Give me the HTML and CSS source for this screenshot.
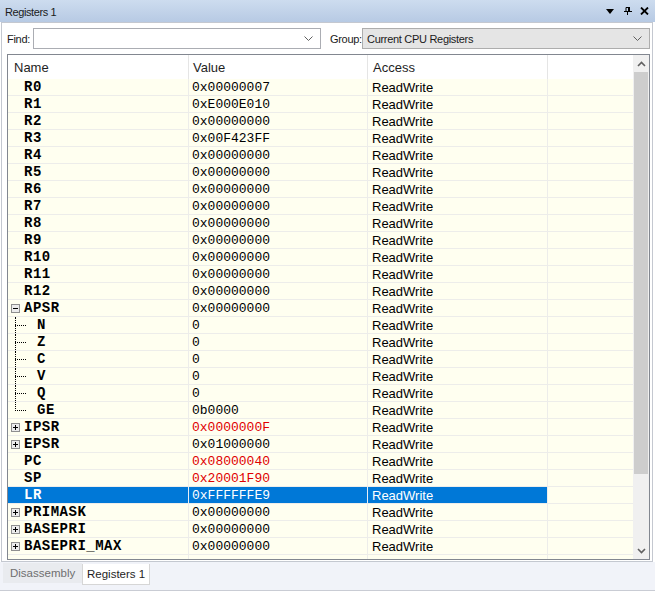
FILE: index.html
```html
<!DOCTYPE html>
<html>
<head>
<meta charset="utf-8">
<title>Registers 1</title>
<link rel="stylesheet" href="styles.css">
</head>
<body>
<div class="titlebar">
  <span class="title">Registers 1</span>
  <svg class="ic ic-menu" width="8" height="5" viewBox="0 0 8 5"><path d="M0 0H8L4 5Z" fill="#000"/></svg>
  <svg class="ic ic-pin" width="8" height="8" viewBox="0 0 8 8"><path d="M2 0.5H5.5V4.5M2 0.5V4.5" fill="none" stroke="#000"/><path d="M5 0V5" stroke="#000" stroke-width="2"/><path d="M0 4.5H8" stroke="#000"/><path d="M3.5 5V8" stroke="#000"/></svg>
  <svg class="ic ic-close" width="9" height="8" viewBox="0 0 9 8"><path d="M1 0.5L8 7.5M8 0.5L1 7.5" stroke="#000" stroke-width="1.8"/></svg>
</div>

<div class="panel">
  <div class="toolbar">
    <span class="lbl lbl-find">Find:</span>
    <div class="combo combo-find">
      <span class="combo-text"></span>
      <svg class="chev" width="9" height="5" viewBox="0 0 9 5"><path d="M0.5 0.5L4.5 4.5L8.5 0.5" fill="none" stroke="#606060"/></svg>
    </div>
    <span class="lbl lbl-group">Group:</span>
    <div class="combo combo-group">
      <span class="combo-text">Current CPU Registers</span>
      <svg class="chev" width="9" height="5" viewBox="0 0 9 5"><path d="M0.5 0.5L4.5 4.5L8.5 0.5" fill="none" stroke="#606060"/></svg>
    </div>
  </div>

  <div class="list">
    <div class="grid">
      <div class="hdr">
        <div class="hc hc-name">Name</div>
        <div class="hc hc-val">Value</div>
        <div class="hc hc-acc">Access</div>
        <div class="hc hc-end"></div>
      </div>
      <div class="rows">
        <div class="row"><div class="c1">R0</div><div class="c2">0x00000007</div><div class="c3">ReadWrite</div><div class="c4"></div></div>
        <div class="row"><div class="c1">R1</div><div class="c2">0xE000E010</div><div class="c3">ReadWrite</div><div class="c4"></div></div>
        <div class="row"><div class="c1">R2</div><div class="c2">0x00000000</div><div class="c3">ReadWrite</div><div class="c4"></div></div>
        <div class="row"><div class="c1">R3</div><div class="c2">0x00F423FF</div><div class="c3">ReadWrite</div><div class="c4"></div></div>
        <div class="row"><div class="c1">R4</div><div class="c2">0x00000000</div><div class="c3">ReadWrite</div><div class="c4"></div></div>
        <div class="row"><div class="c1">R5</div><div class="c2">0x00000000</div><div class="c3">ReadWrite</div><div class="c4"></div></div>
        <div class="row"><div class="c1">R6</div><div class="c2">0x00000000</div><div class="c3">ReadWrite</div><div class="c4"></div></div>
        <div class="row"><div class="c1">R7</div><div class="c2">0x00000000</div><div class="c3">ReadWrite</div><div class="c4"></div></div>
        <div class="row"><div class="c1">R8</div><div class="c2">0x00000000</div><div class="c3">ReadWrite</div><div class="c4"></div></div>
        <div class="row"><div class="c1">R9</div><div class="c2">0x00000000</div><div class="c3">ReadWrite</div><div class="c4"></div></div>
        <div class="row"><div class="c1">R10</div><div class="c2">0x00000000</div><div class="c3">ReadWrite</div><div class="c4"></div></div>
        <div class="row"><div class="c1">R11</div><div class="c2">0x00000000</div><div class="c3">ReadWrite</div><div class="c4"></div></div>
        <div class="row"><div class="c1">R12</div><div class="c2">0x00000000</div><div class="c3">ReadWrite</div><div class="c4"></div></div>
        <div class="row"><div class="c1 has-exp"><svg class="exp" width="9" height="9" viewBox="0 0 9 9"><rect x="0.5" y="0.5" width="8" height="8" fill="#ececec" stroke="#8f8f8f"/><path d="M2 4.5H7" stroke="#000"/></svg>APSR</div><div class="c2">0x00000000</div><div class="c3">ReadWrite</div><div class="c4"></div></div>
        <div class="row"><div class="c1 child"><span class="twig"></span>N</div><div class="c2">0</div><div class="c3">ReadWrite</div><div class="c4"></div></div>
        <div class="row"><div class="c1 child"><span class="twig"></span>Z</div><div class="c2">0</div><div class="c3">ReadWrite</div><div class="c4"></div></div>
        <div class="row"><div class="c1 child"><span class="twig"></span>C</div><div class="c2">0</div><div class="c3">ReadWrite</div><div class="c4"></div></div>
        <div class="row"><div class="c1 child"><span class="twig"></span>V</div><div class="c2">0</div><div class="c3">ReadWrite</div><div class="c4"></div></div>
        <div class="row"><div class="c1 child"><span class="twig"></span>Q</div><div class="c2">0</div><div class="c3">ReadWrite</div><div class="c4"></div></div>
        <div class="row"><div class="c1 child"><span class="twig last"></span>GE</div><div class="c2">0b0000</div><div class="c3">ReadWrite</div><div class="c4"></div></div>
        <div class="row"><div class="c1 has-exp"><svg class="exp" width="9" height="9" viewBox="0 0 9 9"><rect x="0.5" y="0.5" width="8" height="8" fill="#ececec" stroke="#8f8f8f"/><path d="M2 4.5H7M4.5 2V7" stroke="#000"/></svg>IPSR</div><div class="c2 chg">0x0000000F</div><div class="c3">ReadWrite</div><div class="c4"></div></div>
        <div class="row"><div class="c1 has-exp"><svg class="exp" width="9" height="9" viewBox="0 0 9 9"><rect x="0.5" y="0.5" width="8" height="8" fill="#ececec" stroke="#8f8f8f"/><path d="M2 4.5H7M4.5 2V7" stroke="#000"/></svg>EPSR</div><div class="c2">0x01000000</div><div class="c3">ReadWrite</div><div class="c4"></div></div>
        <div class="row"><div class="c1">PC</div><div class="c2 chg">0x08000040</div><div class="c3">ReadWrite</div><div class="c4"></div></div>
        <div class="row"><div class="c1">SP</div><div class="c2 chg">0x20001F90</div><div class="c3">ReadWrite</div><div class="c4"></div></div>
        <div class="row sel"><div class="c1">LR</div><div class="c2">0xFFFFFFE9</div><div class="c3">ReadWrite</div><div class="c4"></div></div>
        <div class="row"><div class="c1 has-exp"><svg class="exp" width="9" height="9" viewBox="0 0 9 9"><rect x="0.5" y="0.5" width="8" height="8" fill="#ececec" stroke="#8f8f8f"/><path d="M2 4.5H7M4.5 2V7" stroke="#000"/></svg>PRIMASK</div><div class="c2">0x00000000</div><div class="c3">ReadWrite</div><div class="c4"></div></div>
        <div class="row"><div class="c1 has-exp"><svg class="exp" width="9" height="9" viewBox="0 0 9 9"><rect x="0.5" y="0.5" width="8" height="8" fill="#ececec" stroke="#8f8f8f"/><path d="M2 4.5H7M4.5 2V7" stroke="#000"/></svg>BASEPRI</div><div class="c2">0x00000000</div><div class="c3">ReadWrite</div><div class="c4"></div></div>
        <div class="row"><div class="c1 has-exp"><svg class="exp" width="9" height="9" viewBox="0 0 9 9"><rect x="0.5" y="0.5" width="8" height="8" fill="#ececec" stroke="#8f8f8f"/><path d="M2 4.5H7M4.5 2V7" stroke="#000"/></svg>BASEPRI_MAX</div><div class="c2">0x00000000</div><div class="c3">ReadWrite</div><div class="c4"></div></div>
        <div class="row"><div class="c1 has-exp"></div><div class="c2"></div><div class="c3">ReadWrite</div><div class="c4"></div></div>
      </div>
    </div>
    <div class="vscroll">
      <div class="sb-btn"><svg width="9" height="6" viewBox="0 0 9 6"><path d="M1 5L4.5 1.5L8 5" fill="none" stroke="#606060" stroke-width="1.6"/></svg></div>
      <div class="sb-thumb"></div>
      <div class="sb-track"></div>
      <div class="sb-btn"><svg width="9" height="6" viewBox="0 0 9 6"><path d="M1 1L4.5 4.5L8 1" fill="none" stroke="#606060" stroke-width="1.6"/></svg></div>
    </div>
  </div>
</div>

<div class="tabs">
  <div class="tab tab-off">Disassembly</div>
  <div class="tab tab-on">Registers 1</div>
</div>
</body>
</html>
```

FILE: styles.css
```css
* { box-sizing: border-box; }

body {
  margin: 0;
  width: 655px;
  height: 592px;
  overflow: hidden;
  background: #ffffff;
  font-family: "Liberation Sans", Arial, sans-serif;
  color: #000;
}

/* ---------- title bar ---------- */
.titlebar {
  height: 22px;
  display: flex;
  align-items: center;
  padding-left: 5px;
  background: linear-gradient(#cddcef, #b7cae4);
}
.title {
  flex: 1;
  font-size: 11px;
  letter-spacing: -0.4px;
  color: #1a1a1a;
  margin-top: 1px;
}
.ic { display: block; }
.ic-menu { margin-top: 1px; }
.ic-pin { margin-left: 10px; }
.ic-close { margin-left: 8px; margin-right: 6px; }

/* ---------- panel ---------- */
.panel {
  margin-left: 1px;
  width: 652px;
  height: 540px;
  border: 1px solid #c4c8d0;
  padding-bottom: 1px;
}

.toolbar {
  height: 31px;
  padding: 5px 0 5px 5px;
  display: flex;
  align-items: center;
}
.lbl {
  font-size: 11px;
  letter-spacing: -0.3px;
  color: #1a1a1a;
  white-space: nowrap;
  flex: none;
}
.lbl-find { width: 26px; }
.lbl-group { width: 32px; margin-left: 9px; }

.combo {
  width: 288px;
  height: 21px;
  flex: none;
  display: flex;
  align-items: center;
  border: 1px solid #abadb3;
  padding: 0 7px 0 4px;
}
.combo-find { background: #ffffff; }
.combo-group { background: #e5e5e5; border-color: #adadad; }
.combo-text {
  flex: 1;
  font-size: 11px;
  letter-spacing: -0.3px;
  color: #1a1a1a;
  white-space: nowrap;
}
.chev { display: block; }

/* ---------- list ---------- */
.list {
  margin-left: 5px;
  width: 643px;
  height: 506px;
  border: 1px solid #828790;
  display: flex;
}
.grid {
  width: 625px;
  display: flex;
  flex-direction: column;
  overflow: hidden;
}

.hdr, .row {
  display: grid;
  grid-template-columns: 181px 179px 180px 1fr;
}
.hdr {
  height: 24px;
  background: #ffffff;
  flex: none;
}
.hc {
  border-right: 1px solid #e5e5e5;
  font-size: 13px;
  line-height: 25px;
  color: #1e1e1e;
}
.hc-name { padding-left: 6px; }
.hc-val { padding-left: 4px; }
.hc-acc { padding-left: 5px; }
.hc-end { border-right: none; }

.rows {
  flex: 1;
  background: #fffff0;
  overflow: hidden;
}
.row { height: 17px; }
.row > div {
  height: 17px;
  border-bottom: 1px solid #ededea;
  border-right: 1px solid #ededea;
  line-height: 17px;
  white-space: nowrap;
  overflow: hidden;
}
.row > .c4 { border-right: none; }

.c1 {
  padding-left: 16px;
  padding-top: 1px;
  font-family: "Liberation Mono", "Courier New", monospace;
  font-weight: bold;
  font-size: 14px;
  letter-spacing: 0.5px;
  display: flex;
  align-items: center;
}
.c1.has-exp { padding-left: 3px; padding-top: 0; }
.c1.has-exp .exp { margin-top: 0; }
.exp { display: block; margin-right: 4px; flex: none; }
.c1.child { padding-left: 7px; padding-top: 0; align-items: stretch; }
.c1.child .twig + * { }
.twig {
  width: 11px;
  margin-right: 11px;
  flex: none;
  border-left: 1px dotted #000;
  background-image: linear-gradient(to right, #000 50%, transparent 50%);
  background-size: 2px 1px;
  background-repeat: repeat-x;
  background-position: 1px 8px;
}
.twig.last {
  align-self: flex-start;
  height: 9px;
}

.c2 {
  padding-left: 3px;
  font-family: "Liberation Mono", "Courier New", monospace;
  font-size: 13px;
}
.c2.chg { color: #e00000; }
.c3 {
  padding-left: 4px;
  font-size: 13px;
}

.row.sel .c1, .row.sel .c2, .row.sel .c3 {
  background: #0078d7;
  color: #ffffff;
  border-bottom-color: #ededea;
}
.row.sel .c1, .row.sel .c2 { border-right-color: #e8eef6; }
.row.sel .c3 { border-right-color: #ededea; }

/* ---------- scrollbar ---------- */
.vscroll {
  width: 16px;
  background: #f0f0f0;
  display: flex;
  flex-direction: column;
}
.sb-btn {
  height: 17px;
  flex: none;
  display: flex;
  align-items: center;
  justify-content: center;
}
.sb-btn svg { display: block; }
.sb-thumb {
  height: 402px;
  flex: none;
  background: #cdcdcd;
  margin: 0 1px;
}
.sb-track { flex: 1; }

/* ---------- tabs ---------- */
.tabs {
  height: 29px;
  background: #f1f3f9;
  border-bottom: 1px solid #c9ccd4;
  display: flex;
  align-items: flex-start;
  padding-left: 3px;
}
.tab {
  font-size: 11.5px;
  white-space: nowrap;
}
.tab-off {
  width: 79px;
  height: 20px;
  margin-top: 1px;
  padding-left: 7px;
  line-height: 21px;
  background: #e9ebef;
  color: #6f6f6f;
}
.tab-on {
  width: 68px;
  height: 21px;
  margin-top: 2px;
  padding-left: 4px;
  line-height: 20px;
  background: #ffffff;
  border: 1px solid #d6d6d6;
  border-top: none;
  color: #1e1e1e;
}
```
